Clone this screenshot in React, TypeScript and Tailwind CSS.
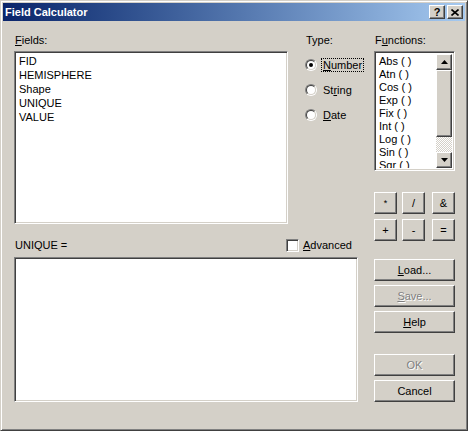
import React from "react";

const raised =
  "border border-t-white border-l-white border-r-[#404040] border-b-[#404040] shadow-[inset_-1px_-1px_0_#808080]";
const sunken =
  "border border-t-[#808080] border-l-[#808080] border-r-white border-b-white shadow-[inset_1px_1px_0_#404040,inset_-1px_-1px_0_#d4d0c8]";

const fields = ["FID", "HEMISPHERE", "Shape", "UNIQUE", "VALUE"];
const functions = ["Abs ( )", "Atn ( )", "Cos ( )", "Exp ( )", "Fix ( )", "Int ( )", "Log ( )", "Sin ( )", "Sqr ( )"];

function Key({ text, k }: { text: string; k: number }) {
  return (
    <>
      {text.slice(0, k)}
      <span className="underline underline-offset-[1px]">{text[k]}</span>
      {text.slice(k + 1)}
    </>
  );
}

function Button({
  children,
  disabled,
  className = "",
}: {
  children: React.ReactNode;
  disabled?: boolean;
  className?: string;
}) {
  return (
    <div
      className={`flex items-center justify-center bg-[#d4d0c8] ${raised} ${
        disabled ? "text-[#808080] [text-shadow:1px_1px_0_#fff]" : "text-black"
      } ${className}`}
    >
      {children}
    </div>
  );
}

function Radio({ checked, children }: { checked?: boolean; children: React.ReactNode }) {
  return (
    <div className="flex h-[14px] items-center">
      <div className="h-[12px] w-[12px] rounded-full border border-t-[#808080] border-l-[#808080] border-r-white border-b-white">
        <div className="flex h-full w-full items-center justify-center rounded-full border border-t-[#404040] border-l-[#404040] border-r-[#d4d0c8] border-b-[#d4d0c8] bg-white">
          {checked && <div className="h-[4px] w-[4px] rounded-full bg-black" />}
        </div>
      </div>
      <div className="ml-[4px]">{children}</div>
    </div>
  );
}

function Arrow({ down }: { down?: boolean }) {
  return (
    <svg width="7" height="4" viewBox="0 0 7 4">
      <polygon points={down ? "0,0 7,0 3.5,4" : "3.5,0 7,4 0,4"} fill="#000" />
    </svg>
  );
}

export default function App() {
  return (
    <div className="h-[431px] w-[468px] bg-[#d4d0c8] font-['Liberation_Sans',Arial,sans-serif] text-[11px] leading-[13px] text-black">
      <div className="h-full w-full border border-t-[#d4d0c8] border-l-[#d4d0c8] border-r-[#404040] border-b-[#404040]">
        <div className="flex h-full w-full flex-col p-[2px] shadow-[inset_1px_1px_0_#fff,inset_-1px_-1px_0_#808080]">
          {/* title bar */}
          <div className="flex h-[18px] items-center bg-linear-to-r from-[#0a246a] to-[#a6caf0] pl-[2px] pr-[2px]">
            <span className="text-[11px] font-bold text-white">Field Calculator</span>
            <div className="ml-auto flex items-center gap-[2px]">
              <Button className="h-[14px] w-[16px] text-[11px] font-bold leading-none">?</Button>
              <Button className="h-[14px] w-[16px]">
                <svg width="8" height="7" viewBox="0 0 8 7">
                  <path d="M0.5 0.5 L7.5 6.5 M7.5 0.5 L0.5 6.5" stroke="#000" strokeWidth="1.6" />
                </svg>
              </Button>
            </div>
          </div>

          {/* body */}
          <div className="flex pl-[11px] pt-[13px]">
            {/* left column */}
            <div className="flex w-[344px] flex-col">
              <div className="flex">
                <div className="flex flex-col">
                  <div className="h-[13px] pl-[1px]">
                    <Key text="Fields:" k={0} />
                  </div>
                  <div className={`mt-[4px] h-[173px] w-[274px] bg-white pl-[4px] pt-[2px] leading-[14px] ${sunken}`}>
                    {fields.map((f) => (
                      <div key={f}>{f}</div>
                    ))}
                  </div>
                </div>
                <div className="ml-[17px] flex flex-col">
                  <div className="h-[13px] pl-[1px]">Type:</div>
                  <div className="mt-[11px] flex flex-col gap-[11px]">
                    <Radio checked>
                      <span className="border border-dotted border-black px-[1px]">
                        <Key text="Number" k={0} />
                      </span>
                    </Radio>
                    <Radio>
                      <span className="pl-[2px]">
                        <Key text="String" k={2} />
                      </span>
                    </Radio>
                    <Radio>
                      <span className="pl-[2px]">
                        <Key text="Date" k={0} />
                      </span>
                    </Radio>
                  </div>
                </div>
              </div>

              <div className="mt-[15px] flex h-[13px] items-center">
                <span className="w-[272px] pl-[1px]">UNIQUE =</span>
                <div className={`h-[13px] w-[13px] bg-white ${sunken}`} />
                <span className="ml-[4px]">
                  <Key text="Advanced" k={0} />
                </span>
              </div>

              <div className={`mt-[5px] h-[145px] w-[344px] bg-white ${sunken}`} />
            </div>

            {/* right column */}
            <div className="ml-[16px] flex w-[81px] flex-col">
              <div className="h-[13px] pl-[1px]">
                <Key text="Functions:" k={1} />
              </div>
              <div className={`mt-[4px] flex h-[120px] w-[81px] bg-white p-[2px] ${sunken}`}>
                <div className="flex-1 overflow-hidden pl-[2px] pt-[1px]">
                  {functions.map((f) => (
                    <div key={f} className="whitespace-pre">
                      {f}
                    </div>
                  ))}
                </div>
                <div className="flex w-[16px] flex-col">
                  <Button className="h-[16px]">
                    <Arrow />
                  </Button>
                  <Button className="h-[68px]">{null}</Button>
                  <div className="h-[16px] bg-[repeating-conic-gradient(#ffffff_0_25%,#d4d0c8_0_50%)] bg-[length:2px_2px]" />
                  <Button className="h-[16px]">
                    <Arrow down />
                  </Button>
                </div>
              </div>

              <div className="mt-[21px] flex flex-col gap-[5px]">
                <div className="flex">
                  <Button className="h-[22px] w-[23px] text-[9px]">*</Button>
                  <Button className="ml-[5px] h-[22px] w-[23px]">/</Button>
                  <Button className="ml-[7px] h-[22px] w-[23px]">&amp;</Button>
                </div>
                <div className="flex">
                  <Button className="h-[22px] w-[23px]">+</Button>
                  <Button className="ml-[5px] h-[22px] w-[23px]">-</Button>
                  <Button className="ml-[7px] h-[22px] w-[23px]">=</Button>
                </div>
              </div>

              <div className="mt-[18px] flex flex-col gap-[4px]">
                <Button className="h-[22px]">
                  <Key text="Load..." k={0} />
                </Button>
                <Button className="h-[22px]" disabled>
                  <Key text="Save..." k={0} />
                </Button>
                <Button className="h-[22px]">
                  <Key text="Help" k={0} />
                </Button>
                <Button className="mt-[17px] h-[22px]" disabled>
                  OK
                </Button>
                <Button className="h-[22px]">Cancel</Button>
              </div>
            </div>
          </div>
        </div>
      </div>
    </div>
  );
}
